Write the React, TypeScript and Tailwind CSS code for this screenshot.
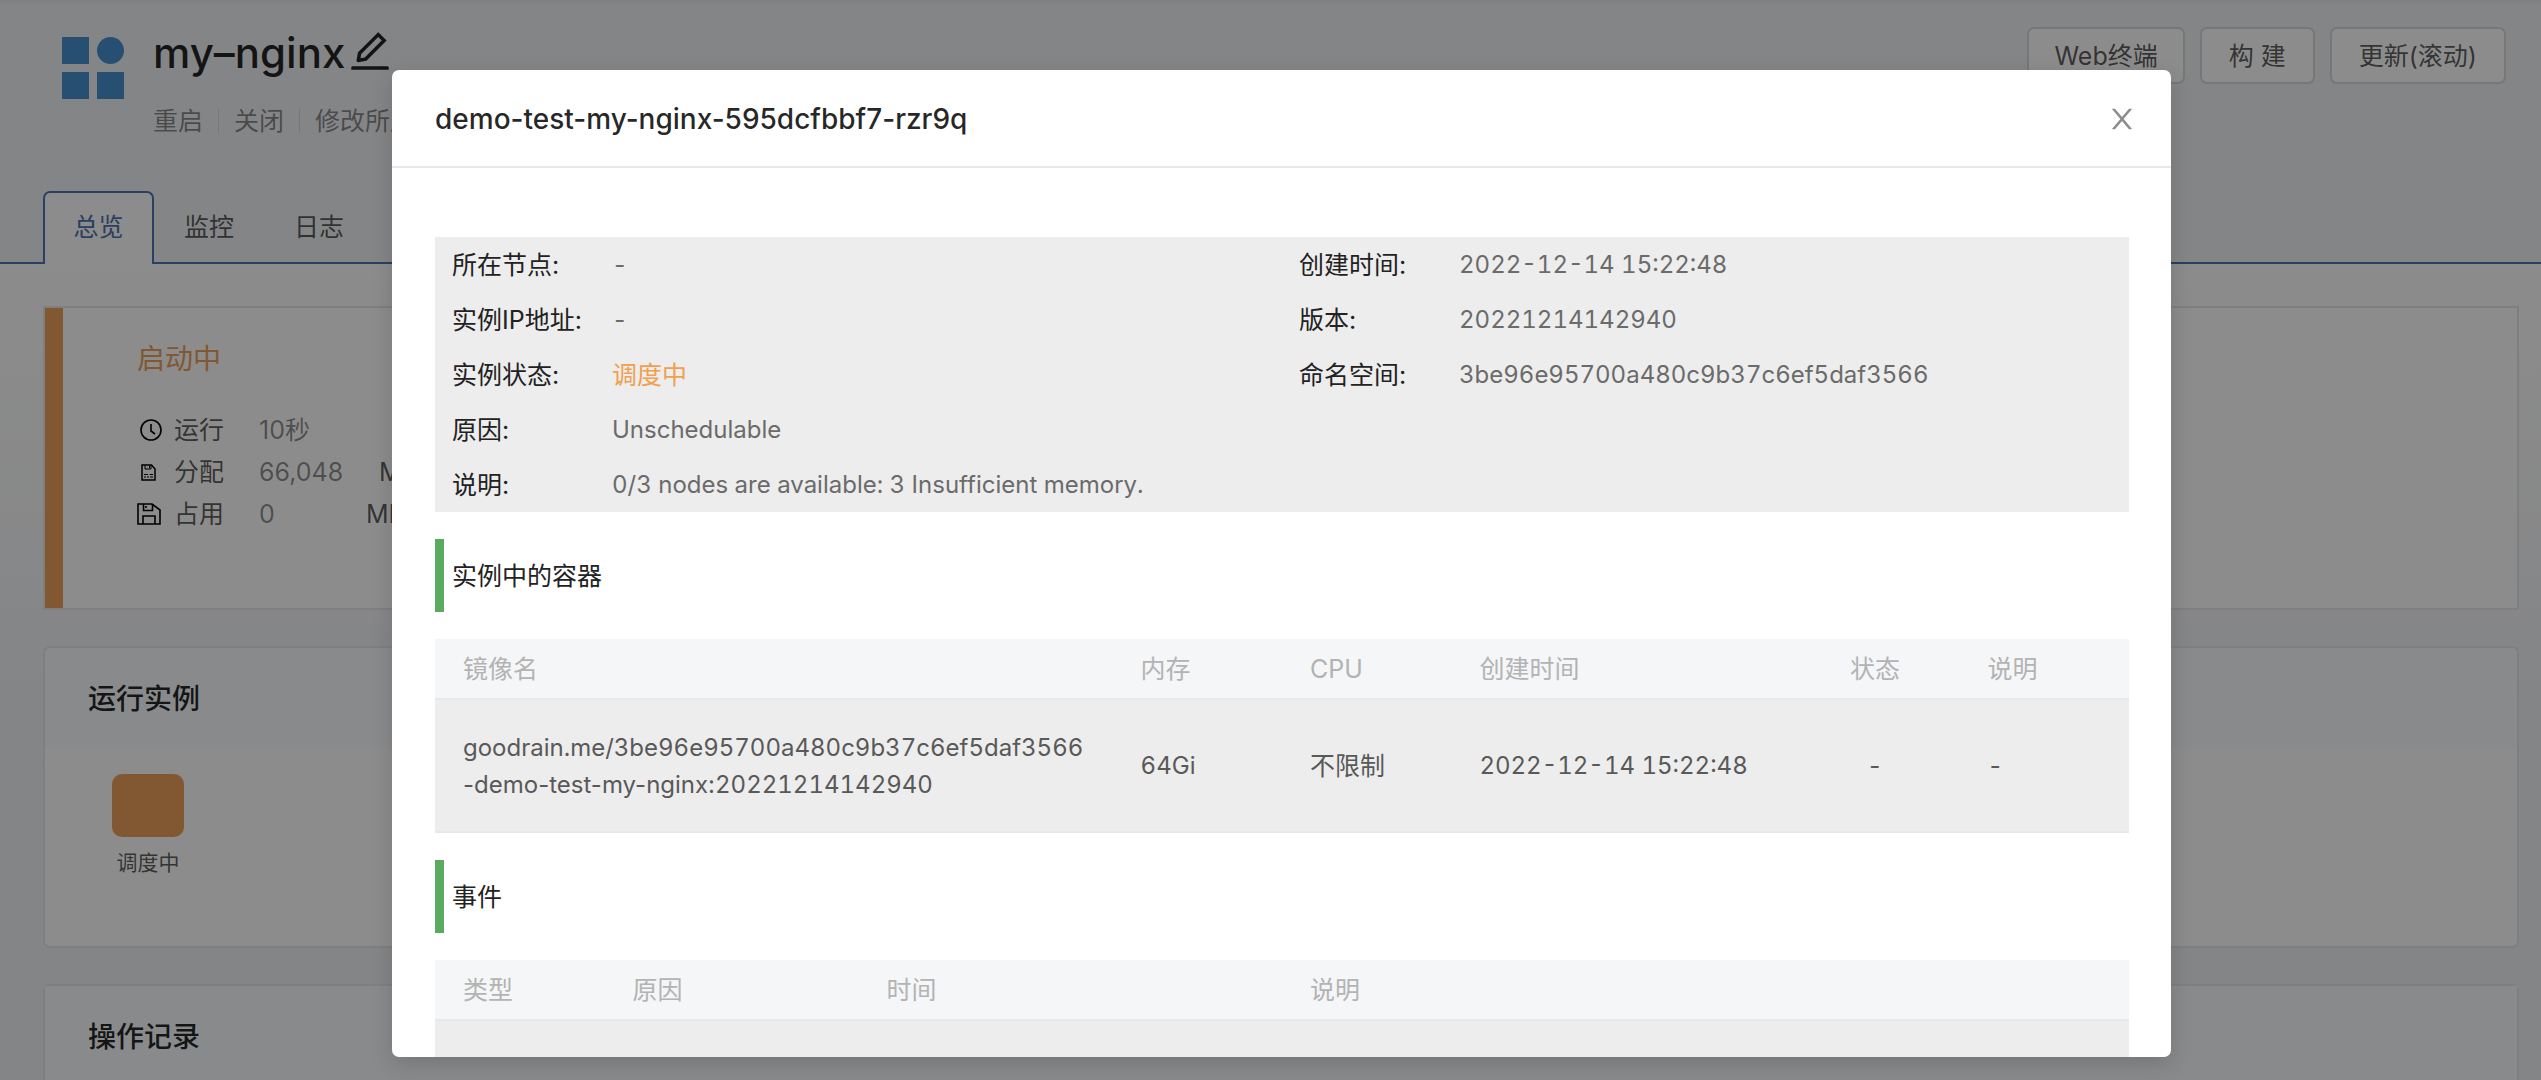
import React from "react";
import { AiOutlineEdit } from "react-icons/ai";

const actions = ["重启", "关闭", "修改所属"];
const tabs = ["总览", "监控", "日志"];

const details: [string, string, string?][][] = [
  [["所在节点:", "-"], ["创建时间:", "2022-12-14 15:22:48"]],
  [["实例IP地址:", "-"], ["版本:", "20221214142940"]],
  [["实例状态:", "调度中", "text-[#f0a04f]"], ["命名空间:", "3be96e95700a480c9b37c6ef5daf3566"]],
  [["原因:", "Unschedulable"]],
  [["说明:", "0/3 nodes are available: 3 Insufficient memory."]],
];

function LogoIcon() {
  return (
    <svg className="h-[62px] w-[62px]" viewBox="0 0 62 62" fill="#4790d0" aria-hidden="true">
      <rect width="27" height="27" />
      <circle cx="48.5" cy="13.5" r="13.5" />
      <rect y="35" width="27" height="27" />
      <rect x="35" y="35" width="27" height="27" />
    </svg>
  );
}

function ClockIcon() {
  return (
    <svg className="ml-[3px] h-[22px] w-[22px]" viewBox="0 0 22 22" fill="none" stroke="#000" strokeWidth="1.6" aria-hidden="true">
      <circle cx="11" cy="11" r="10" />
      <path d="M11 5v7l4 3" />
    </svg>
  );
}

function CardIcon() {
  return (
    <svg className="ml-1 h-[17px] w-[15px]" viewBox="0 0 15 17" fill="none" stroke="#000" strokeWidth="1.5" aria-hidden="true">
      <path d="M1 1h9.500l3.500 4v11H1z" />
      <path d="M4 1v4h6V1M8.500 2v2" strokeWidth="1" />
      <path d="M3 10.500h4M8.500 10.500h3.500M3 13h2M6 13h2M9 13h3" strokeWidth="1" />
    </svg>
  );
}

function SaveIcon() {
  return (
    <svg className="h-[22px] w-[24px]" viewBox="0 0 24 22" fill="none" stroke="#000" strokeWidth="1.6" aria-hidden="true">
      <path d="M1 1h14l8 6v14H1z" />
      <path d="M6.500 1v6.500h9V1M6 21v-8h12v8M9 3v2" />
    </svg>
  );
}

function CloseIcon() {
  return (
    <svg className="h-8 w-8" viewBox="0 0 1024 1024" fill="currentColor" aria-hidden="true">
      <path d="M563.8 512l262.5-312.9c4.4-5.2.7-13.1-6.1-13.1h-79.8c-4.7 0-9.2 2.1-12.300 5.700L511.600 449.800 295.100 191.700c-3-3.600-7.500-5.700-12.300-5.700H203c-6.800 0-10.500 7.900-6.100 13.100L459.400 512 196.900 824.900A7.950 7.950 0 0 0 203 838h79.800c4.700 0 9.200-2.100 12.300-5.700l216.500-258.100 216.500 258.100c3 3.600 7.500 5.700 12.300 5.700h79.800c6.800 0 10.500-7.900 6.100-13.100L563.800 512z" />
    </svg>
  );
}

function Metric({ icon, label, value, unit, wide }: { icon: React.ReactNode; label: string; value: string; unit?: string; wide?: boolean }) {
  return (
    <div className="flex h-[42px] items-center">
      <span className="flex w-[37px] items-center">{icon}</span>
      <span className="w-[85px] text-black/65">{label}</span>
      <span className={wide ? "w-[120px] text-black/45" : "w-[107px] text-black/45"}>{value}</span>
      {unit && <span className="text-black/65">{unit}</span>}
    </div>
  );
}

function SectionTitle({ children }: { children: React.ReactNode }) {
  return (
    <h3 className="my-[27px] flex h-[73px] items-center border-l-[9px] border-[#5aaa60] pl-2 text-[#222]">{children}</h3>
  );
}

function Th({ children, center }: { children: React.ReactNode; center?: boolean }) {
  return (
    <th scope="col" className={center ? "px-7 text-center font-normal" : "px-7 text-left font-normal"}>
      {children}
    </th>
  );
}

function ServicePage() {
  return (
    <div className="h-full overflow-hidden bg-[#f0f2f5]">
      <header className="flex items-start bg-linear-to-b from-[#e6e8eb] to-[#f0f2f5] to-[5px] pr-[35px] pl-[62px]">
        <div className="pt-[37px]">
          <LogoIcon />
        </div>
        <div className="ml-[29px] grow pt-[26px]">
          <h1 className="flex h-[54px] items-center gap-px text-[42px] font-medium text-black/85">
            my–nginx
            <button aria-label="编辑名称" className="-mt-1">
              <AiOutlineEdit className="size-12" />
            </button>
          </h1>
          <ul className="mt-[22px] flex h-[38px] items-center text-black/45">
            {actions.map((a, i) => (
              <li key={a} className={i ? "flex items-center before:mx-[15px] before:h-6 before:w-px before:bg-black/10" : "flex items-center"}>
                <a href="#">{a}</a>
              </li>
            ))}
          </ul>
        </div>
        <div className="flex gap-[15px] pt-[27px] text-black/65">
          <button className="h-[57px] rounded-[7px] border-2 border-[#d9d9d9] bg-white px-[25px]">Web终端</button>
          <button className="h-[57px] rounded-[7px] border-2 border-[#d9d9d9] bg-white px-[27px]">构 建</button>
          <button className="h-[57px] rounded-[7px] border-2 border-[#d9d9d9] bg-white px-[27px]">更新(滚动)</button>
        </div>
      </header>
      <nav className="mt-[51px] flex border-b-2 border-[#4d73b1] pl-[43px]">
        {tabs.map((t, i) => (
          <button
            key={t}
            className={
              i === 0
                ? "-mb-[2px] h-[73px] w-[111px] rounded-t-[7px] border-2 border-b-0 border-[#4d73b1] bg-white pb-1 text-[#4d73b1]"
                : "h-[71px] w-[110px] text-black/65"
            }
          >
            {t}
          </button>
        ))}
      </nav>
      <main className="flex h-[1200px] flex-col gap-9 bg-linear-to-b from-white to-[#f0f2f5] to-[480px] pt-[42px] pr-[22px] pl-[43px]">
        <section className="flex h-[304px] border-2 border-[#e8e8e8] bg-white">
          <div className="w-[18px] bg-[#eba059]" />
          <div className="pt-[29px] pl-[74px]">
            <h2 className="mb-[27px] text-[28px] leading-[45px] text-[#eba059]">启动中</h2>
            <Metric icon={<ClockIcon />} label="运行" value="10秒" />
            <Metric icon={<CardIcon />} label="分配" value="66,048" unit="MB" wide />
            <Metric icon={<SaveIcon />} label="占用" value="0" unit="MB" />
          </div>
        </section>
        <section className="h-[302px] overflow-hidden rounded-[7px] border-2 border-[#e8e8e8] bg-white">
          <h2 className="flex h-[100px] items-center bg-[#f9fbfd] pt-[2px] pl-[43px] text-[28px] font-medium text-black/85">运行实例</h2>
          <div className="ml-[67px] flex w-[72px] flex-col items-center pt-[26px]">
            <button aria-label="实例" className="h-[63px] w-full rounded-[10px] bg-[#eba059]" />
            <span className="mt-[10px] text-[21px] leading-8 text-black/65">调度中</span>
          </div>
        </section>
        <section className="h-[302px] rounded-[7px] border-2 border-[#e8e8e8] bg-white">
          <h2 className="flex h-[100px] items-center bg-[#f9fbfd] pt-[2px] pl-[43px] text-[28px] font-medium text-black/85">操作记录</h2>
        </section>
      </main>
    </div>
  );
}

function PodDialog() {
  return (
    <div
      role="dialog"
      aria-labelledby="pod-title"
      className="mt-[70px] mr-[370px] mb-[23px] ml-[392px] flex grow flex-col overflow-hidden rounded-[7px] bg-white shadow-[0_7px_21px_rgba(0,0,0,0.15)]"
    >
      <div className="flex h-[98px] shrink-0 items-center justify-between border-b-2 border-[#e8e8e8] pt-[2px] pr-[33px] pl-[43px]">
        <h2 id="pod-title" className="text-[28px] font-medium text-black/85">
          demo-test-my-nginx-595dcfbbf7-rzr9q
        </h2>
        <button aria-label="关闭" className="text-black/45">
          <CloseIcon />
        </button>
      </div>
      <div className="min-h-0 grow overflow-hidden pt-[69px] pr-[42px] pl-[43px] tabular-nums">
        <dl className="bg-[#ededed]">
          {details.map((row, i) => (
            <div key={i} className="flex">
              {row.map(([label, value, color]) => (
                <div key={label} className="flex h-[55px] w-1/2 items-center pl-[17px]">
                  <dt className="w-[160px] shrink-0 text-[#222] proportional-nums">{label}</dt>
                  <dd className={color ?? "text-[24px] text-[#6b6b6b]"}>{value}</dd>
                </div>
              ))}
            </div>
          ))}
        </dl>
        <SectionTitle>实例中的容器</SectionTitle>
        <table className="w-full table-fixed">
          <colgroup>
            <col className="w-[40%]" />
            <col className="w-[10%]" />
            <col className="w-[10%]" />
            <col className="w-[20%]" />
            <col className="w-[10%]" />
            <col className="w-[10%]" />
          </colgroup>
          <thead>
            <tr className="h-[60px] border-b-2 border-[#e8e8e8] bg-[#f4f6f8] text-[#b3b3b3]">
              <Th>镜像名</Th>
              <Th>内存</Th>
              <Th>CPU</Th>
              <Th>创建时间</Th>
              <Th center>状态</Th>
              <Th>说明</Th>
            </tr>
          </thead>
          <tbody>
            <tr className="h-[133px] border-b-2 border-[#e8e8e8] bg-[#ededed] text-[24px] text-[#595959]">
              <td className="pl-7 leading-[37px]">
                goodrain.me/3be96e95700a480c9b37c6ef5daf3566
                <br />
                <span className="proportional-nums">-demo-test-my-nginx:</span>20221214142940
              </td>
              <td className="px-7">64Gi</td>
              <td className="px-7 text-[25px]">不限制</td>
              <td className="px-7">2022-12-14 15:22:48</td>
              <td className="px-7 text-center">-</td>
              <td className="px-7">-</td>
            </tr>
          </tbody>
        </table>
        <SectionTitle>事件</SectionTitle>
        <table className="w-full table-fixed">
          <colgroup>
            <col className="w-[10%]" />
            <col className="w-[15%]" />
            <col className="w-[25%]" />
            <col className="w-[50%]" />
          </colgroup>
          <thead>
            <tr className="h-[60px] border-b-2 border-[#e8e8e8] bg-[#f4f6f8] text-[#b3b3b3]">
              <Th>类型</Th>
              <Th>原因</Th>
              <Th>时间</Th>
              <Th>说明</Th>
            </tr>
          </thead>
          <tbody>
            <tr className="h-[133px] bg-[#ededed]">
              <td colSpan={4} />
            </tr>
          </tbody>
        </table>
      </div>
    </div>
  );
}

export default function App() {
  return (
    <div className="relative h-screen overflow-hidden font-['Inter','Noto_Sans_CJK_SC',sans-serif] text-[25px] leading-[38px]">
      <ServicePage />
      <div className="absolute inset-0 flex bg-black/45">
        <PodDialog />
      </div>
    </div>
  );
}
